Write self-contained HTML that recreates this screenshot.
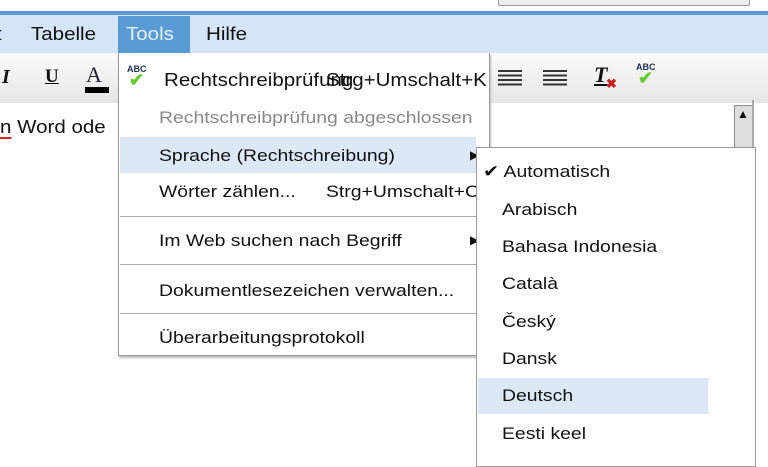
<!DOCTYPE html>
<html><head><meta charset="utf-8"><style>
*{margin:0;padding:0;box-sizing:border-box}
body{width:768px;height:460px;overflow:hidden;background:#fff;font-family:"Liberation Sans",sans-serif;font-size:18px;color:#111;position:relative}
.a{position:absolute;white-space:nowrap}
.s{transform:scaleX(1.14);transform-origin:0 0}
</style></head><body>
<div class="a" style="left:0;top:0;width:768px;height:12px;background:#fff"></div>
<div class="a" style="left:498px;top:-4px;width:252px;height:10px;border:1px solid #999;background:#eee;border-radius:2px"></div>
<div class="a" style="left:0;top:11px;width:768px;height:4px;background:#5b9bd5"></div>
<div class="a" style="left:0;top:15px;width:768px;height:38px;background:#d4e5f7"></div>
<div class="a" style="left:118px;top:16px;width:72px;height:37px;background:#5b9bd5"></div>
<div class="a s" style="left:-4px;top:24px">t</div>
<div class="a s" style="left:31px;top:24px">Tabelle</div>
<div class="a s" style="left:126px;top:24px;color:#e8f0fa">Tools</div>
<div class="a s" style="left:206px;top:24px">Hilfe</div>
<div class="a" style="left:0;top:53px;width:768px;height:50px;background:linear-gradient(#fbfbfb,#e6e6e6)"></div>
<div class="a" style="left:2px;top:66px;font-family:'Liberation Serif',serif;font-style:italic;font-weight:bold;font-size:20px">I</div>
<div class="a" style="left:45px;top:66px;font-family:'Liberation Serif',serif;font-weight:bold;text-decoration:underline;font-size:19px">U</div>
<div class="a" style="left:86px;top:62px;font-family:'Liberation Serif',serif;font-size:22px;color:#223">A</div>
<div class="a" style="left:85px;top:87px;width:24px;height:6px;background:#000"></div>
<div class="a" style="left:498px;top:70px;width:24px;height:16px;background:repeating-linear-gradient(#333 0 2px,transparent 2px 4.5px)"></div>
<div class="a" style="left:543px;top:70px;width:24px;height:16px;background:repeating-linear-gradient(#333 0 2px,transparent 2px 4.5px)"></div>
<div class="a" style="left:594px;top:62px;font-family:'Liberation Serif',serif;font-style:italic;font-weight:bold;font-size:22px;text-decoration:underline">T</div>
<div class="a" style="left:606px;top:76px;color:#c22;font-size:13px;font-weight:bold">✖</div>
<div class="a" style="left:636px;top:62px;font-size:9px;font-weight:bold;color:#235">ABC</div>
<div class="a" style="left:638px;top:68px;font-size:18px;color:#6c3;font-weight:bold">✔</div>
<div class="a s" style="left:0;top:117px"><span style="border-bottom:2px solid #d22">n</span> Word ode</div>
<div class="a" style="left:734px;top:105px;width:20px;height:46px;background:#ddd;border:1px solid #888"></div>
<div class="a" style="left:737px;top:107px;font-size:12px">▲</div>
<div class="a" style="left:752px;top:100px;width:2px;height:360px;background:#aaa"></div>
<!-- tools menu -->
<div class="a" style="left:118px;top:53px;width:372px;height:303px;background:#fff;border:1px solid #999;border-top:none;box-shadow:1px 2px 2px #bbb"></div>
<div class="a" style="left:120px;top:137px;width:356px;height:36px;background:#dde8f7"></div>
<div class="a" style="left:127px;top:64px;font-size:9px;font-weight:bold;color:#235">ABC</div>
<div class="a" style="left:129px;top:70px;font-size:18px;color:#6c3;font-weight:bold">✔</div>
<div class="a s" style="left:164px;top:70px">Rechtschreibprüfung</div>
<div class="a s" style="left:326px;top:70px">Strg+Umschalt+K</div>
<div class="a s" style="left:159px;top:108px;color:#888;font-size:17px">Rechtschreibprüfung abgeschlossen</div>
<div class="a s" style="left:159px;top:146px;font-size:17px">Sprache (Rechtschreibung)</div>
<div class="a" style="left:470px;top:148px;font-size:12px">▶</div>
<div class="a s" style="left:159px;top:182px;font-size:17px">Wörter zählen...</div>
<div class="a s" style="left:326px;top:182px;font-size:17px">Strg+Umschalt+C</div>
<div class="a" style="left:120px;top:216px;width:360px;height:1px;background:#aaa"></div>
<div class="a s" style="left:159px;top:231px;font-size:17px">Im Web suchen nach Begriff</div>
<div class="a" style="left:470px;top:233px;font-size:12px">▶</div>
<div class="a" style="left:120px;top:264px;width:360px;height:1px;background:#aaa"></div>
<div class="a s" style="left:159px;top:281px;font-size:17px">Dokumentlesezeichen verwalten...</div>
<div class="a" style="left:120px;top:313px;width:360px;height:1px;background:#aaa"></div>
<div class="a s" style="left:159px;top:328px;font-size:17px">Überarbeitungsprotokoll</div>
<!-- submenu -->
<div class="a" style="left:476px;top:147px;width:280px;height:320px;background:#fff;border:1px solid #999"></div>
<div class="a" style="left:478px;top:378px;width:230px;height:36px;background:#dde8f7"></div>
<div class="a s" style="left:483px;top:162px;font-size:17px">✔ Automatisch</div>
<div class="a s" style="left:502px;top:200px;font-size:17px">Arabisch</div>
<div class="a s" style="left:502px;top:237px;font-size:17px">Bahasa Indonesia</div>
<div class="a s" style="left:502px;top:274px;font-size:17px">Català</div>
<div class="a s" style="left:502px;top:312px;font-size:17px">Český</div>
<div class="a s" style="left:502px;top:349px;font-size:17px">Dansk</div>
<div class="a s" style="left:502px;top:386px;font-size:17px">Deutsch</div>
<div class="a s" style="left:502px;top:424px;font-size:17px">Eesti keel</div>
</body></html>
